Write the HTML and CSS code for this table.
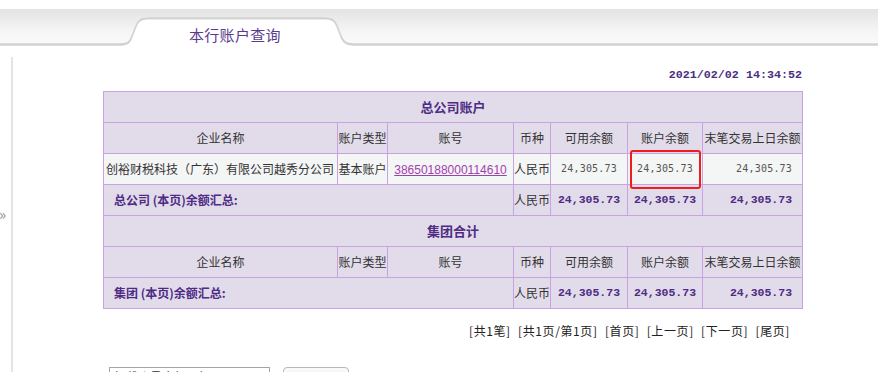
FILE: index.html
```html
<!DOCTYPE html>
<html lang="zh-CN">
<head>
<meta charset="utf-8">
<title>本行账户查询</title>
<link rel="stylesheet" href="styles.css">
</head>
<body>
<div class="band">
  <svg class="band-art" width="878" height="37" viewBox="0 0 878 37">
    <defs>
      <linearGradient id="bg" x1="0" y1="0" x2="0" y2="1">
        <stop offset="0" stop-color="#e3e3e3"/>
        <stop offset="0.6" stop-color="#f5f5f5"/>
        <stop offset="1" stop-color="#fbfbfb"/>
      </linearGradient>
    </defs>
    <rect x="0" y="0" width="878" height="37" fill="url(#bg)"/>
    <path d="M0 35.5 L120 35.5 C129 35.5 131 32 133 26 L137 16 C139 11 142 9.5 150 9.5 L324 9.5 C331 9.5 334 11 336 16 L340 26 C342 32 345 35.5 354 35.5 L878 35.5" fill="none" stroke="#d2d2d2" stroke-width="2.5"/>
    <path d="M0 37 L120 37 C129 37 131 33 133 27 L137 17 C139 12 142 10.5 150 10.5 L324 10.5 C331 10.5 334 12 336 17 L340 27 C342 33 345 37 354 37 Z" fill="#ffffff"/>
  </svg>
  <div class="tab-title">本行账户查询</div>
</div>

<div class="main">
  <div class="sidebar"><span class="arrow">»</span></div>
  <div class="content">
    <div class="stamp">2021/02/02 14:34:52</div>
    <table class="grid">
      <colgroup>
        <col class="c1"><col class="c2"><col class="c3"><col class="c4"><col class="c5"><col class="c6"><col class="c7">
      </colgroup>
      <tr><td colspan="7" class="title">总公司账户</td></tr>
      <tr class="head">
        <td>企业名称</td><td>账户类型</td><td>账号</td><td>币种</td><td>可用余额</td><td>账户余额</td><td>末笔交易上日余额</td>
      </tr>
      <tr class="data">
        <td class="left">创裕财税科技（广东）有限公司越秀分公司</td>
        <td>基本账户</td>
        <td><a href="#" class="acct">38650188000114610</a></td>
        <td>人民币</td>
        <td class="num">24,305.73</td>
        <td class="num mark">24,305.73<span class="redbox"></span></td>
        <td class="num right">24,305.73</td>
      </tr>
      <tr class="sum">
        <td colspan="3" class="sumlabel">总公司 (本页)余额汇总:</td>
        <td class="cur">人民币</td>
        <td class="bnum">24,305.73</td>
        <td class="bnum">24,305.73</td>
        <td class="bnum right">24,305.73</td>
      </tr>
      <tr><td colspan="7" class="title">集团合计</td></tr>
      <tr class="head">
        <td>企业名称</td><td>账户类型</td><td>账号</td><td>币种</td><td>可用余额</td><td>账户余额</td><td>末笔交易上日余额</td>
      </tr>
      <tr class="sum">
        <td colspan="3" class="sumlabel">集团 (本页)余额汇总:</td>
        <td class="cur">人民币</td>
        <td class="bnum">24,305.73</td>
        <td class="bnum">24,305.73</td>
        <td class="bnum right">24,305.73</td>
      </tr>
    </table>
    <div class="pager">[共1笔] [共1页/第1页] [首页] [上一页] [下一页] [尾页]</div>
    <div class="controls">
      <div class="select">加载账号余额明细</div>
      <div class="btn">导出</div>
    </div>
  </div>
</div>
</body>
</html>
```
FILE: styles.css
```css
html, body {
  margin: 0;
  padding: 0;
  background: #ffffff;
}
body {
  font-family: "Noto Sans CJK SC", "Liberation Sans", sans-serif;
  font-size: 12px;
  color: #333333;
  overflow: hidden;
}
.band {
  position: relative;
  margin-top: 9px;
  height: 37px;
}
.band-art {
  position: absolute;
  left: 0;
  top: 0;
}
.tab-title {
  position: relative;
  padding-left: 189px;
  padding-top: 16px;
  font-size: 15px;
  line-height: 20px;
  color: #5a3b8e;
  letter-spacing: 0.3px;
}
.main {
  display: flex;
}
.sidebar {
  flex: none;
  width: 13px;
  border-right: 2px solid #e4e4e4;
  margin-top: 11px;
  height: 320px;
  box-sizing: border-box;
}
.arrow {
  display: block;
  margin-top: 149px;
  font-size: 15px;
  line-height: 16px;
  color: #8f8f8f;
  margin-left: -1px;
}
.content {
  flex: none;
  margin-left: 90px;
  width: 699px;
}
.stamp {
  margin-top: 21px;
  text-align: right;
  font-family: "Liberation Mono", "DejaVu Sans Mono", monospace;
  font-weight: bold;
  font-size: 11.7px;
  line-height: 16px;
  color: #4b2e83;
  padding-right: 0;
}
.grid {
  margin-top: 8px;
  width: 699px;
  border-collapse: collapse;
  table-layout: fixed;
  background: #e2dcea;
  border: 1px solid #c7a3e2;
}
.c1 { width: 234px; }
.c2 { width: 50px; }
.c3 { width: 126px; }
.c4 { width: 37px; }
.c5 { width: 77px; }
.c6 { width: 75px; }
.c7 { width: 100px; }
.grid td {
  border: 1px solid #c7a3e2;
  height: 30px;
  padding: 0;
  text-align: center;
  white-space: nowrap;
  overflow: visible;
  line-height: 16px;
}
.grid td.title {
  font-weight: bold;
  font-size: 13px;
  color: #4e2b85;
}
.grid tr.head td {
  color: #333333;
}
.grid tr.data td {
  background: #f4f5f5;
}
.grid td.left {
  text-align: left;
  padding-left: 2px;
}
.acct {
  color: #a23fb0;
  text-decoration: underline;
  font-family: "Liberation Sans", sans-serif;
  font-size: 12px;
}
.grid td.num {
  font-family: "DejaVu Sans Mono", monospace;
  font-size: 10px;
  letter-spacing: 0.2px;
  color: #555555;
}
.grid td.right {
  text-align: right;
  padding-right: 10px;
}
.grid td.mark {
  position: relative;
}
.redbox {
  position: absolute;
  left: 2px;
  top: -4px;
  width: 71px;
  height: 39px;
  box-sizing: border-box;
  border: 2px solid #f01c1c;
  border-radius: 3px;
}
.grid td.sumlabel {
  text-align: left;
  padding-left: 10px;
  font-weight: bold;
  color: #4e2b85;
  font-size: 12px;
}
.grid td.cur {
  color: #333333;
}
.grid td.bnum {
  font-family: "Liberation Mono", "DejaVu Sans Mono", monospace;
  font-weight: bold;
  font-size: 11.5px;
  color: #4e2b85;
}
.pager {
  margin-top: 14px;
  text-align: right;
  padding-right: 12px;
  line-height: 16px;
  color: #222222;
  letter-spacing: 0.6px;
  word-spacing: 4px;
}
.controls {
  display: flex;
  align-items: flex-start;
  margin-top: 28px;
  margin-left: 6px;
  gap: 13px;
}
.select {
  width: 161px;
  height: 20px;
  box-sizing: border-box;
  border: 1px solid #a5a5a5;
  padding-left: 4px;
  line-height: 18px;
  color: #333;
}
.btn {
  width: 66px;
  height: 22px;
  box-sizing: border-box;
  border: 1px solid #b8b8b8;
  border-radius: 4px;
  background: linear-gradient(#fafafa, #e8e8e8);
  text-align: center;
  line-height: 20px;
}
```
